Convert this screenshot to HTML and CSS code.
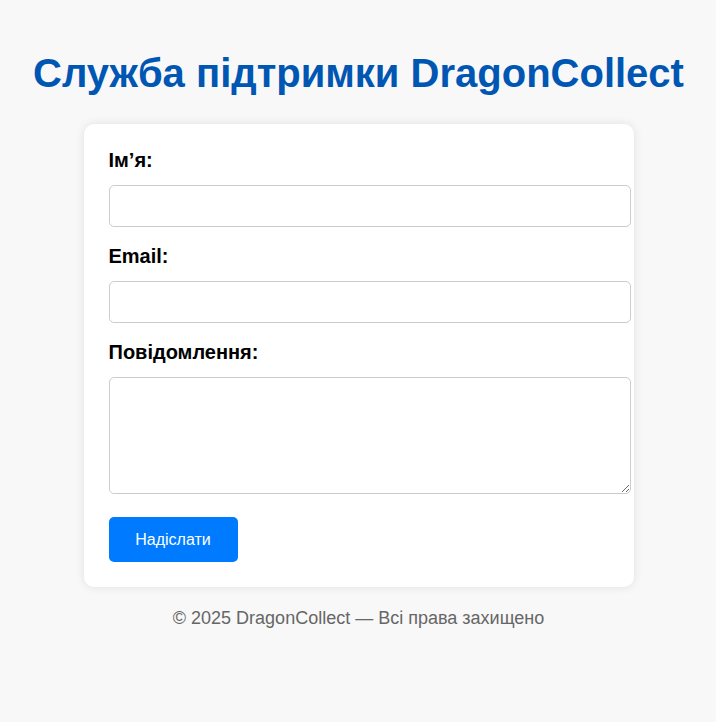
FILE: index.html
```html
<!DOCTYPE html>
<html lang="uk">
<head>
<meta charset="utf-8">
<title>Служба підтримки DragonCollect</title>
<link rel="stylesheet" href="styles.css">
</head>
<body>
<h1 class="title">Служба підтримки DragonCollect</h1>
<form class="card">
  <label class="label" for="name">Ім’я:</label>
  <input class="field" id="name" type="text">
  <label class="label" for="email">Email:</label>
  <input class="field" id="email" type="email">
  <label class="label" for="msg">Повідомлення:</label>
  <textarea class="field area" id="msg"></textarea>
  <button class="btn" type="submit">Надіслати</button>
</form>
<footer class="foot">© 2025 DragonCollect — Всі права захищено</footer>
</body>
</html>
```
FILE: styles.css
```css
html, body {
  margin: 0;
  padding: 0;
}
body {
  background: #f8f8f8;
  font-family: "Liberation Sans", Arial, sans-serif;
  color: #000;
  padding: 20px 20px 20px 21px;
}
.title {
  text-align: center;
  color: #0056b3;
  font-size: 40px;
  margin: 30px 0 28px;
  line-height: 1.15;
}
.card {
  display: flex;
  flex-direction: column;
  align-items: flex-start;
  width: 500px;
  margin: 0 auto;
  padding: 25px;
  background: #fff;
  border-radius: 10px;
  box-shadow: 0 0 10px rgba(0,0,0,0.1);
}
.label {
  font-weight: bold;
  font-size: 20px;
  margin-bottom: 13px;
}
.field {
  width: 500px;
  height: 20px;
  padding: 10px;
  border: 1px solid #ccc;
  border-radius: 5px;
  font-size: 16px;
  font-family: inherit;
  margin: 0 0 18px;
}
.area {
  height: 95px;
  margin-bottom: 23px;
  resize: vertical;
}
.btn {
  background: #007bff;
  color: #fff;
  border: none;
  border-radius: 5px;
  font-family: inherit;
  font-size: 16px;
  width: 129px;
  height: 45px;
  padding: 0;
  cursor: pointer;
}
.foot {
  text-align: center;
  color: #666;
  font-size: 18px;
  margin-top: 21px;
}
```
